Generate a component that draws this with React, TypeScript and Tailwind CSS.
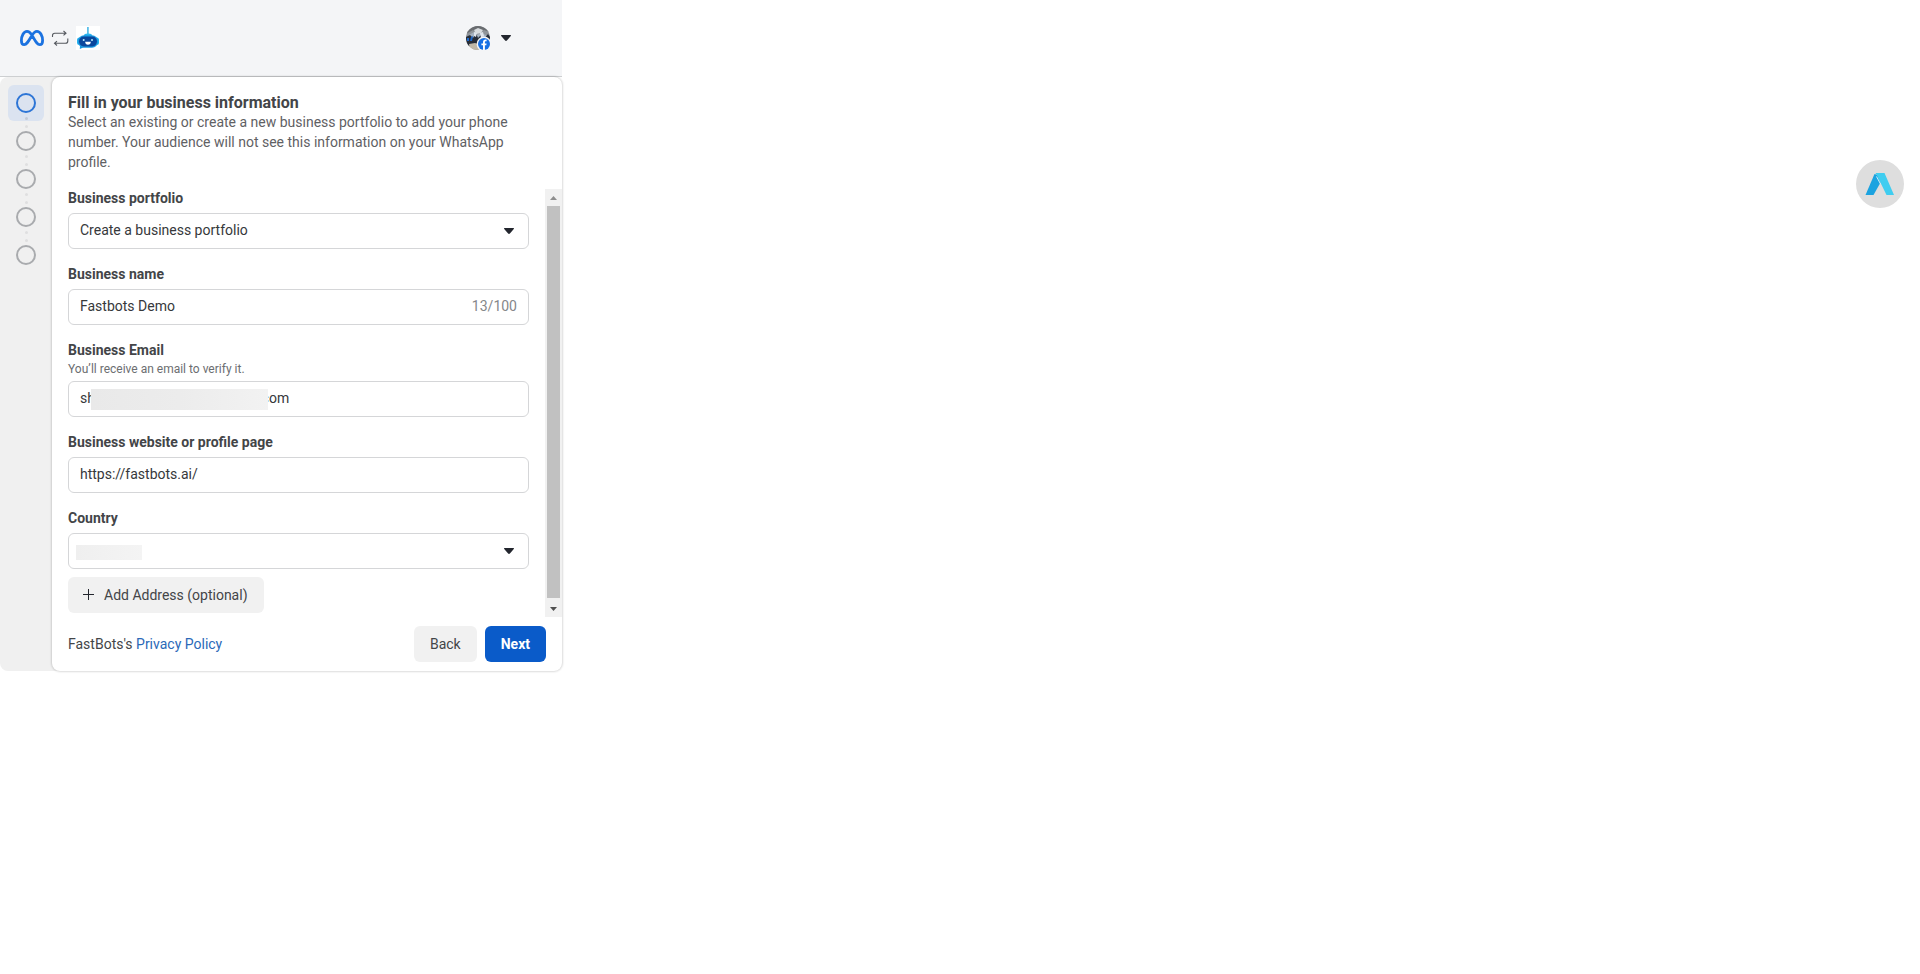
import { useState } from 'react';

const Caret = ({ className = '' }: { className?: string }) => (
  <svg viewBox="0 0 10 6" className={`h-[6px] w-[10px] ${className}`} fill="#23262e" aria-hidden="true">
    <path d="M0.6 0h8.8c.6 0 .8.7.4 1.1L5.9 5.5c-.5.6-1.3.6-1.8 0L.2 1.1C-.2.7 0 0 .6 0z" />
  </svg>
);

const MetaLogo = () => (
  <svg viewBox="0 0 24 16" className="h-4 w-6" fill="none" stroke="#1b72e0" strokeWidth="2.8" aria-label="Meta">
    <path d="M12 5.2C10.3 2.6 8.8 1.4 7 1.4 3.7 1.4 1.4 6 1.4 10.500c0 2.600 1 4.100 2.800 4.100 2.300 0 3.500-2 7.100-8.100C13.300 3 14.800 1.400 17 1.400c3.300 0 5.600 4.500 5.600 9.100 0 2.600-1 4.100-2.800 4.100-2.300 0-3.500-1.800-6-6.200L12 5.200z" />
  </svg>
);

const SwapIcon = () => (
  <svg viewBox="0 0 18 16" className="h-4 w-[18px]" fill="none" stroke="#55595f" strokeWidth="1.1" aria-hidden="true">
    <path d="M1.500 7V5.500c0-1.400.9-2.300 2.300-2.300H15M12.500 1 15 3.200l-2.500 2.200" />
    <path d="M16.800 8.500V11c0 1.400-.9 2.300-2.300 2.300H3.500M6 11.100l-2.500 2.200L6 15.500" />
  </svg>
);

const BotLogo = () => (
  <svg viewBox="0 0 24 24" className="size-6 bg-white" aria-label="FastBots">
    <path d="M11.900 1v8" stroke="#5cbfe9" strokeWidth="1.800" />
    <path d="M8 10c0-1.600 1-2.400 4-2.400s4 .8 4 2.400z" fill="#2bb4ee" />
    <path d="M4 19.500 3.800 23l4.500-2z" fill="#1793dd" />
    <rect x="1" y="11.500" width="22" height="7.500" rx="2.500" fill="#26b2ee" />
    <rect x="2" y="9.200" width="20" height="12.600" rx="6" fill="#1c9be2" />
    <rect x="3" y="10.600" width="18" height="9.800" rx="4.800" fill="#0b479d" />
    <circle cx="7.700" cy="14" r="1" fill="#b9ecff" />
    <circle cx="16" cy="14" r="1" fill="#b9ecff" />
    <path d="M9.200 15.800h5.600c0 1.900-1.100 3-2.800 3s-2.800-1.100-2.800-3z" fill="#fff" />
  </svg>
);

const Avatar = () => (
  <svg viewBox="0 0 24 24" className="size-6 overflow-visible" aria-label="Account">
    <defs>
      <clipPath id="avatar">
        <circle cx="12" cy="12" r="12" />
      </clipPath>
    </defs>
    <g clipPath="url(#avatar)">
      <rect width="24" height="24" fill="#8f9499" />
      <path d="M0 0h24v6l-6-2-6 3-5-3-7 4z" fill="#696c70" />
      <path d="m8 4 4-2 5 2-2 3-5 1z" fill="#d8dcdf" />
      <path d="M3 9l5-3 3 3 4-2 5 2 2 4H3z" fill="#a7b3c1" />
      <path d="M0 11l4-2 3 3 3-5 2 5 4-4 2 5 4-5 2 3v9H0z" fill="#252c38" />
      <path d="m8 6 3 1-1 4-2-1zM14 7l3-1 1 4-3 2z" fill="#dfe5ec" />
      <path d="M1 12h2v3H1zM5 11l2-1-1 5H4z" fill="#1b66c9" />
      <path d="M3 18l6-1 6 2v5H4z" fill="#c0b8a8" />
    </g>
    <circle cx="18" cy="18" r="7.400" fill="#f4f5f7" />
    <circle cx="18" cy="18" r="6" fill="#1770e4" />
    <path d="M17 24v-4.700h-1.600v-1.800H17v-1.300c0-1.700 1-2.600 2.500-2.600.6 0 1.100.1 1.100.1v1.500h-.7c-.8 0-1 .5-1 1v1.300h1.700l-.3 1.800h-1.400V24z" fill="#fff" />
  </svg>
);

const fieldClass =
  'h-9 w-full appearance-none rounded-md border border-[#d5d6d8] bg-white px-[11px] pb-[3px] text-sm text-[#36383b] outline-none';
const labelClass = 'mb-[5px] block text-sm leading-5 font-bold text-[#434548]';

const App = () => {
  const [portfolio, setPortfolio] = useState('new');
  const [name, setName] = useState('Fastbots Demo');
  const [email, setEmail] = useState('sh' + ' '.repeat(48) + 'com');
  const [website, setWebsite] = useState('https://fastbots.ai/');
  const [country, setCountry] = useState('');

  return (
    <div className="relative min-h-screen bg-white font-[Roboto,sans-serif]">
      <div className="w-full max-w-[562px]">
        {/* Header */}
        <header className="flex h-[77px] items-center justify-between border-b border-[#cdcfd1] bg-[#f4f5f7] pr-[51px] pl-5">
          <div className="flex items-center gap-[7px]">
            <MetaLogo />
            <SwapIcon />
            <BotLogo />
          </div>
          <button type="button" aria-label="Account menu" className="flex items-center gap-[11px]">
            <Avatar />
            <Caret />
          </button>
        </header>

        <div className="flex rounded-lg bg-[#f0f0f0]">
          {/* Steps */}
          <ol className="flex w-[52px] shrink-0 flex-col items-center pt-2">
            <li className="flex size-9 items-center justify-center rounded-md bg-[#dbe3f0]">
              <span className="size-5 rounded-full border-2 border-[#2d75d6]" />
            </li>
            {[2, 3, 4, 5].map((step) => (
              <li key={step} className="flex flex-col items-center">
                <span className={`flex h-[18px] flex-col items-center justify-center gap-[5px] ${step === 2 ? '-mt-2' : ''}`}>
                  <span className={`size-[3px] rounded-full ${step === 2 ? 'bg-[#c3cad6]' : 'bg-[#dfdfe0]'}`} />
                  <span className="size-[3px] rounded-full bg-[#dfdfe0]" />
                </span>
                <span className="size-5 rounded-full border-2 border-[#a9abae]" />
              </li>
            ))}
          </ol>

          {/* Form */}
          <form
            className="min-w-0 flex-1 rounded-lg bg-white pt-4 shadow-[0_0_2px_1px_rgba(0,0,0,0.14)]"
            onSubmit={(e) => e.preventDefault()}
          >
            <div className="px-4">
              <h1 className="text-base leading-[19px] font-bold text-[#434548]">Fill in your business information</h1>
              <p className="text-sm leading-5 text-[#5f6164]">
                Select an existing or create a new business portfolio to add your phone number. Your audience will not see
                this information on your WhatsApp profile.
              </p>
            </div>

            <div className="mt-4 flex">
              <div className="flex min-w-0 flex-1 flex-col gap-[15px] px-4 pb-1">
                <div>
                  <label htmlFor="portfolio" className={labelClass}>Business portfolio</label>
                  <div className="relative">
                    <select id="portfolio" value={portfolio} onChange={(e) => setPortfolio(e.target.value)} className={fieldClass}>
                      <option value="new">Create a business portfolio</option>
                    </select>
                    <Caret className="pointer-events-none absolute top-[15px] right-[15px]" />
                  </div>
                </div>

                <div>
                  <label htmlFor="name" className={labelClass}>Business name</label>
                  <div className="relative">
                    <input id="name" type="text" maxLength={100} value={name} onChange={(e) => setName(e.target.value)} className={fieldClass} />
                    <span className="absolute top-[7px] right-3 text-sm leading-5 text-[#85878a]">{name.length}/100</span>
                  </div>
                </div>

                <div>
                  <label htmlFor="email" className="block text-sm leading-5 font-bold text-[#434548]">Business Email</label>
                  <p className="mt-px mb-1 text-xs leading-4 text-[#6c6e71]">You’ll receive an email to verify it.</p>
                  <div className="relative">
                    <input id="email" type="text" value={email} onChange={(e) => setEmail(e.target.value)} className={fieldClass} />
                    <span className="absolute top-2 left-[23px] h-[21px] w-[177px] bg-linear-to-r from-[#e9e9e9] via-[#ececec] to-[#f2f2f2]" />
                  </div>
                </div>

                <div>
                  <label htmlFor="website" className={labelClass}>Business website or profile page</label>
                  <input id="website" type="text" value={website} onChange={(e) => setWebsite(e.target.value)} className={fieldClass} />
                </div>

                <div>
                  <label htmlFor="country" className={labelClass}>Country</label>
                  <div className="relative">
                    <select id="country" value={country} onChange={(e) => setCountry(e.target.value)} className={fieldClass}>
                      <option value="" />
                    </select>
                    <span className="pointer-events-none absolute top-3 left-2 h-[15px] w-[66px] bg-linear-to-r from-[#efefef] to-[#f4f4f4]" />
                    <Caret className="pointer-events-none absolute top-[15px] right-[15px]" />
                  </div>
                  <button type="button" className="mt-2 flex h-9 items-center gap-[10px] rounded-md bg-[#f1f1f1] pr-4 pb-px pl-[15px] text-sm text-[#434548]">
                    <svg viewBox="0 0 11 11" className="size-[11px]" stroke="#23262e" strokeWidth="1" aria-hidden="true">
                      <path d="M5.500 0v11M0 5.500h11" />
                    </svg>
                    Add Address (optional)
                  </button>
                </div>
              </div>

              {/* Scroll track */}
              <div className="mt-px flex w-[17px] shrink-0 flex-col items-center bg-[#f1f1f1]">
                <svg viewBox="0 0 17 17" className="size-[17px]" fill="#8e8e8e" aria-hidden="true">
                  <path d="M5 11l3.500-4L12 11z" />
                </svg>
                <div className="w-[13px] flex-1 bg-[#c1c1c1]" />
                <svg viewBox="0 0 17 19" className="h-[19px] w-[17px]" fill="#505050" aria-hidden="true">
                  <path d="M5 9l3.500 4L12 9z" />
                </svg>
              </div>
            </div>

            {/* Footer */}
            <div className="flex items-center justify-between px-4 py-[9px]">
              <p className="pb-px text-sm text-[#434548]">
                FastBots's <a href="#privacy" className="text-[#2b69b8]">Privacy Policy</a>
              </p>
              <div className="flex gap-2">
                <button type="button" className="h-9 rounded-md bg-[#f1f1f1] px-4 pb-px text-sm text-[#434548]">Back</button>
                <button type="submit" className="h-9 rounded-md bg-[#0a5bc9] px-4 pb-px text-sm font-bold text-white">Next</button>
              </div>
            </div>
          </form>
        </div>
      </div>

      {/* Floating assistant button */}
      <button
        type="button"
        aria-label="Open assistant"
        className="fixed top-40 right-4 flex size-12 items-center justify-center rounded-full bg-[#dedede]"
      >
        <svg viewBox="0 0 30 24" className="h-6 w-[30px]" aria-hidden="true">
          <path d="M9.500 2 12.500 3l3 7.500L8.500 23H.5z" fill="#1ba3e0" />
          <path d="M10.500 1h9l9.500 22h-7.500L12 3.500z" fill="#3fcdf0" />
          <path d="M11.500 4.500 15.500 12" stroke="#cfeffa" strokeWidth="1" />
        </svg>
      </button>
    </div>
  );
};

export default App;
